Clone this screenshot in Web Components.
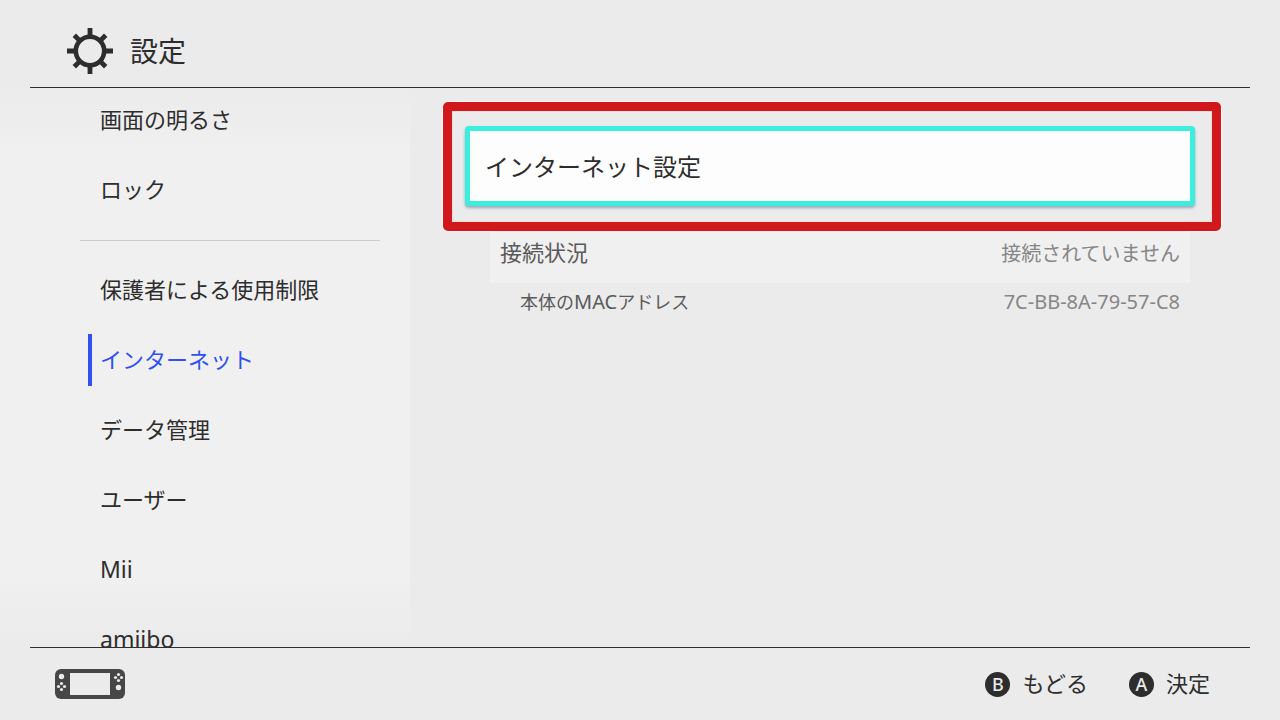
<!DOCTYPE html>
<html lang="ja">
<head>
<meta charset="utf-8">
<title>設定</title>
<style>
  html, body { margin: 0; height: 100%; }
  body {
    background: #ebebeb;
    color: #2d2d2d;
    font-family: "Noto Sans", "Noto Sans CJK JP", sans-serif;
  }
</style>
</head>
<body>
<settings-page>
  <settings-header slot="header">設定</settings-header>
  <settings-nav slot="nav">
    <nav-item>画面の明るさ</nav-item>
    <nav-item>ロック</nav-item>
    <nav-divider></nav-divider>
    <nav-item>保護者による使用制限</nav-item>
    <nav-item current>インターネット</nav-item>
    <nav-item>データ管理</nav-item>
    <nav-item>ユーザー</nav-item>
    <nav-item latin>Mii</nav-item>
    <nav-item latin>amiibo</nav-item>
  </settings-nav>
  <callout-frame>
    <focus-button>インターネット設定</focus-button>
  </callout-frame>
  <status-row>
    接続状況
    <span slot="value">接続されていません</span>
  </status-row>
  <status-row sub>
    本体の<latin-text>MAC</latin-text>アドレス
    <span slot="value">7C-BB-8A-79-57-C8</span>
  </status-row>
  <settings-footer slot="footer">
    <key-hint key="B">もどる</key-hint>
    <key-hint key="A">決定</key-hint>
  </settings-footer>
</settings-page>

<script>
const define = (name, html, setup) => {
  const template = document.createElement('template');
  template.innerHTML = html.trim();
  customElements.define(name, class extends HTMLElement {
    constructor() {
      super();
      this.attachShadow({ mode: 'open' }).append(template.content.cloneNode(true));
    }
    connectedCallback() {
      if (setup) setup(this, this.shadowRoot);
    }
  });
};

define('settings-page', `
  <style>
    :host { display: grid; grid-template-rows: 88px minmax(0, 1fr) 73px; height: 100vh; overflow: hidden; }
    .body { display: grid; grid-template-columns: minmax(0, 410px) minmax(0, 1fr); min-height: 0; }
    main { min-width: 0; padding: 14px 59px 0 33px; }
  </style>
  <slot name="header"></slot>
  <div class="body">
    <slot name="nav"></slot>
    <main><slot></slot></main>
  </div>
  <slot name="footer"></slot>`);

define('settings-header', `
  <style>
    :host { display: block; padding: 0 30px; }
    header { display: flex; align-items: center; gap: 16px; height: 88px; box-sizing: border-box;
      padding: 14px 36px 0; border-bottom: 1px solid #2d2d2d; }
    svg { width: 48px; height: 48px; flex: none; }
    h1 { margin: 0; font-size: 28px; line-height: 40px; font-weight: 400; }
  </style>
  <header>
    <svg viewBox="-24 -24 48 48" fill="none" stroke="#2d2d2d" aria-hidden="true">
      <circle r="14.2" stroke-width="4.6"/>
      <path stroke-width="4.8" d="M0-15V-23M0 15V23M-15 0H-23M15 0H23M-10.6-10.6L-15.7-15.7M10.6-10.6L15.7-15.7M-10.6 10.6L-15.7 15.7M10.6 10.6L15.7 15.7"/>
    </svg>
    <h1><slot></slot></h1>
  </header>`);

define('settings-nav', `
  <style>
    :host { display: block; min-height: 0; overflow: hidden auto; scrollbar-width: none;
      background: linear-gradient(#ebebeb, #f0f0f0 64px, #f0f0f0 calc(100% - 72px), #ebebeb); }
    nav { display: flex; flex-direction: column; gap: 18px; padding: 6px 30px 0 80px; }
  </style>
  <nav><slot></slot></nav>`);

define('nav-item', `
  <style>
    :host { display: block; padding-left: 8px; }
    a { display: block; padding: 9px 0 11px 8px; border-left: 4px solid transparent;
      color: inherit; text-decoration: none; font-size: 22px; line-height: 32px; white-space: nowrap; }
    :host([latin]) a { font-size: 23px; }
    :host([current]) a { color: #3250f0; border-color: #3250f0; }
  </style>
  <a href="#"><slot></slot></a>`, (el, root) => {
  if (el.hasAttribute('current')) root.querySelector('a').setAttribute('aria-current', 'page');
});

define('nav-divider', `
  <style>
    :host { display: block; height: 1px; margin: 6px 0 5px; background: #cdcdcd; }
  </style>`);

define('callout-frame', `
  <style>
    :host { display: block; border: 9px solid #d0181d; border-radius: 5px;
      padding: 15px 17px 16px 13px; box-shadow: 0 0 0 1px #f6f6f6, inset 0 0 0 1px #f2dcdc; }
  </style>
  <slot></slot>`);

define('focus-button', `
  <style>
    :host { display: block; }
    button { display: block; width: 100%; height: 80px; margin: 0; padding: 2px 15px 0; text-align: left;
      font: inherit; font-size: 24px; line-height: 36px; color: inherit; background: #fdfdfd;
      border: 5px solid #3beedd; border-radius: 4px; box-shadow: 0 2px 3px #9aa8b8; }
  </style>
  <button type="button"><slot></slot></button>`);

define('status-row', `
  <style>
    :host { display: flex; justify-content: space-between; align-items: baseline; gap: 20px;
      margin: 0 31px 0 47px; padding: 5px 10px 13px; background: #f0f0f0;
      font-size: 22px; line-height: 32px; color: #5a5a5a; }
    :host([sub]) { background: none; padding: 3px 10px 4px 30px; font-size: 18px; }
    .value { color: #868686; font-size: 20px; }
  </style>
  <span><slot></slot></span>
  <span class="value"><slot name="value"></slot></span>`);

define('latin-text', `
  <style>:host { display: inline; font-size: 20px; line-height: 1; }</style><slot></slot>`);

define('settings-footer', `
  <style>
    :host { display: block; padding: 0 30px; }
    footer { display: flex; align-items: center; justify-content: space-between; height: 73px;
      box-sizing: border-box; padding: 0 40px 0 25px; border-top: 1px solid #2d2d2d; }
    svg { width: 70px; height: 30px; }
    .keys { display: flex; gap: 41px; }
  </style>
  <footer>
    <svg viewBox="0 0 70 30" role="img" aria-label="コントローラー">
      <rect width="70" height="30" rx="6" fill="#464646"/>
      <g fill="#ebebeb">
        <rect x="15" y="4" width="40" height="22"/>
        <circle cx="6.5" cy="7.5" r="2.7"/>
        <circle cx="63.5" cy="18.5" r="2.7"/>
        <circle cx="6.5" cy="14.5" r="1.6"/><circle cx="6.5" cy="20.5" r="1.6"/>
        <circle cx="3.5" cy="17.5" r="1.6"/><circle cx="9.5" cy="17.5" r="1.6"/>
        <circle cx="63.5" cy="5.5" r="1.6"/><circle cx="63.5" cy="11.5" r="1.6"/>
        <circle cx="60.5" cy="8.5" r="1.6"/><circle cx="66.5" cy="8.5" r="1.6"/>
      </g>
    </svg>
    <div class="keys"><slot></slot></div>
  </footer>`);

define('key-hint', `
  <style>
    :host { display: block; }
    button { display: flex; align-items: center; gap: 12px; margin: 0; padding: 0; border: 0;
      background: none; color: inherit; font: inherit; font-size: 22px; line-height: 32px; }
    .key { width: 25px; height: 25px; border-radius: 50%; background: #2d2d2d; color: #ebebeb;
      font-size: 18px; line-height: 25px; font-weight: 500; text-align: center; }
    .label { padding-bottom: 2px; }
  </style>
  <button type="button"><span class="key"></span><span class="label"><slot></slot></span></button>`, (el, root) => {
  root.querySelector('.key').textContent = el.getAttribute('key');
});
</script>
</body>
</html>
